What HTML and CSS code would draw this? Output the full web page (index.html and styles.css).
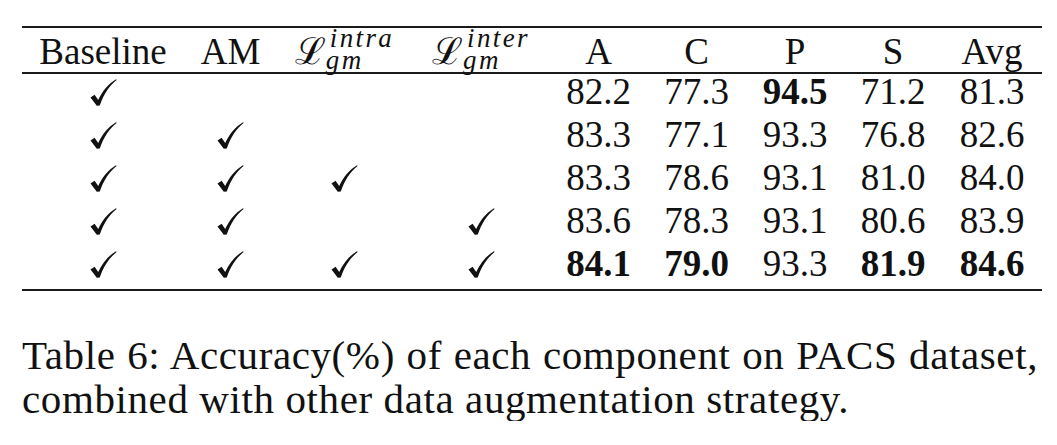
FILE: index.html
```html
<!DOCTYPE html>
<html lang="en">
  <head>
    <meta charset="UTF-8" />
    <title>Table 6</title>
    <link rel="stylesheet" href="styles.css">
  </head>
  <body>
    <div class="page">
      <div class="results">
        <div class="cell head">Baseline</div>
        <div class="cell head">AM</div>
        <div class="cell head">
          <span class="math"><span class="cal">ℒ</span><span class="scripts"><i class="sup">intra</i><i class="sub">gm</i></span></span>
        </div>
        <div class="cell head">
          <span class="math"><span class="cal">ℒ</span><span class="scripts"><i class="sup">inter</i><i class="sub">gm</i></span></span>
        </div>
        <div class="cell head">A</div>
        <div class="cell head">C</div>
        <div class="cell head">P</div>
        <div class="cell head">S</div>
        <div class="cell head">Avg</div>

        <!-- row 1 -->
        <div class="cell"><svg class="tick" viewBox="0 0 27 27"><path d="M0.5 18.5 L4.6 15.8 L8.2 21 C12 12.5 18 5 26 0.2 L26.6 1 C19.5 6.8 13.6 15 9.8 26.6 L6.8 26.8 Z"/></svg></div>
        <div class="cell"></div>
        <div class="cell"></div>
        <div class="cell"></div>
        <div class="cell">82.2</div>
        <div class="cell">77.3</div>
        <div class="cell best">94.5</div>
        <div class="cell">71.2</div>
        <div class="cell">81.3</div>

        <!-- row 2 -->
        <div class="cell"><svg class="tick" viewBox="0 0 27 27"><path d="M0.5 18.5 L4.6 15.8 L8.2 21 C12 12.5 18 5 26 0.2 L26.6 1 C19.5 6.8 13.6 15 9.8 26.6 L6.8 26.8 Z"/></svg></div>
        <div class="cell"><svg class="tick" viewBox="0 0 27 27"><path d="M0.5 18.5 L4.6 15.8 L8.2 21 C12 12.5 18 5 26 0.2 L26.6 1 C19.5 6.8 13.6 15 9.8 26.6 L6.8 26.8 Z"/></svg></div>
        <div class="cell"></div>
        <div class="cell"></div>
        <div class="cell">83.3</div>
        <div class="cell">77.1</div>
        <div class="cell">93.3</div>
        <div class="cell">76.8</div>
        <div class="cell">82.6</div>

        <!-- row 3 -->
        <div class="cell"><svg class="tick" viewBox="0 0 27 27"><path d="M0.5 18.5 L4.6 15.8 L8.2 21 C12 12.5 18 5 26 0.2 L26.6 1 C19.5 6.8 13.6 15 9.8 26.6 L6.8 26.8 Z"/></svg></div>
        <div class="cell"><svg class="tick" viewBox="0 0 27 27"><path d="M0.5 18.5 L4.6 15.8 L8.2 21 C12 12.5 18 5 26 0.2 L26.6 1 C19.5 6.8 13.6 15 9.8 26.6 L6.8 26.8 Z"/></svg></div>
        <div class="cell"><svg class="tick" viewBox="0 0 27 27"><path d="M0.5 18.5 L4.6 15.8 L8.2 21 C12 12.5 18 5 26 0.2 L26.6 1 C19.5 6.8 13.6 15 9.8 26.6 L6.8 26.8 Z"/></svg></div>
        <div class="cell"></div>
        <div class="cell">83.3</div>
        <div class="cell">78.6</div>
        <div class="cell">93.1</div>
        <div class="cell">81.0</div>
        <div class="cell">84.0</div>

        <!-- row 4 -->
        <div class="cell"><svg class="tick" viewBox="0 0 27 27"><path d="M0.5 18.5 L4.6 15.8 L8.2 21 C12 12.5 18 5 26 0.2 L26.6 1 C19.5 6.8 13.6 15 9.8 26.6 L6.8 26.8 Z"/></svg></div>
        <div class="cell"><svg class="tick" viewBox="0 0 27 27"><path d="M0.5 18.5 L4.6 15.8 L8.2 21 C12 12.5 18 5 26 0.2 L26.6 1 C19.5 6.8 13.6 15 9.8 26.6 L6.8 26.8 Z"/></svg></div>
        <div class="cell"></div>
        <div class="cell"><svg class="tick" viewBox="0 0 27 27"><path d="M0.5 18.5 L4.6 15.8 L8.2 21 C12 12.5 18 5 26 0.2 L26.6 1 C19.5 6.8 13.6 15 9.8 26.6 L6.8 26.8 Z"/></svg></div>
        <div class="cell">83.6</div>
        <div class="cell">78.3</div>
        <div class="cell">93.1</div>
        <div class="cell">80.6</div>
        <div class="cell">83.9</div>

        <!-- row 5 -->
        <div class="cell"><svg class="tick" viewBox="0 0 27 27"><path d="M0.5 18.5 L4.6 15.8 L8.2 21 C12 12.5 18 5 26 0.2 L26.6 1 C19.5 6.8 13.6 15 9.8 26.6 L6.8 26.8 Z"/></svg></div>
        <div class="cell"><svg class="tick" viewBox="0 0 27 27"><path d="M0.5 18.5 L4.6 15.8 L8.2 21 C12 12.5 18 5 26 0.2 L26.6 1 C19.5 6.8 13.6 15 9.8 26.6 L6.8 26.8 Z"/></svg></div>
        <div class="cell"><svg class="tick" viewBox="0 0 27 27"><path d="M0.5 18.5 L4.6 15.8 L8.2 21 C12 12.5 18 5 26 0.2 L26.6 1 C19.5 6.8 13.6 15 9.8 26.6 L6.8 26.8 Z"/></svg></div>
        <div class="cell"><svg class="tick" viewBox="0 0 27 27"><path d="M0.5 18.5 L4.6 15.8 L8.2 21 C12 12.5 18 5 26 0.2 L26.6 1 C19.5 6.8 13.6 15 9.8 26.6 L6.8 26.8 Z"/></svg></div>
        <div class="cell best">84.1</div>
        <div class="cell best">79.0</div>
        <div class="cell">93.3</div>
        <div class="cell best">81.9</div>
        <div class="cell best">84.6</div>
      </div>

      <p class="caption">
        <span class="first-line">Table 6: Accuracy(%) of each component on PACS dataset,</span>
        combined with other data augmentation strategy.
      </p>
    </div>
  </body>
</html>
```

FILE: styles.css
```css
body {
  margin: 0;
  background-color: #fff;
  color: #111;
  font-family: "Liberation Serif", "Times New Roman", serif;
}

.page {
  padding: 26px 0 0 22px;
}

.results {
  display: grid;
  grid-template-columns: 162px 93px 135px 138px 97px 99px 98px 98px 100px;
  width: 1020px;
  border-top: 2px solid #1a1a1a;
  border-bottom: 2px solid #1a1a1a;
}

.cell {
  font-size: 37px;
  line-height: 35px;
  height: 43px;
  box-sizing: border-box;
  text-align: center;
  white-space: nowrap;
}

.cell.head {
  height: 46px;
  padding-top: 6px;
  border-bottom: 2px solid #1a1a1a;
}

.best {
  font-weight: bold;
}

.tick {
  width: 27px;
  height: 27px;
  vertical-align: -2px;
  fill: #111;
}

/* L_gm with stacked super/subscript */
.math {
  display: inline-block;
  line-height: 35px;
}

.cal {
  font-family: "DejaVu Serif", serif;
  font-size: 37px;
}

.scripts {
  display: inline-flex;
  flex-direction: column;
  align-items: flex-start;
  vertical-align: 17px;
  margin-top: -20px;
  margin-bottom: -20px;
  font-family: "Liberation Serif", serif;
  font-size: 27px;
  line-height: 22px;
  letter-spacing: 2.4px;
}

.sup {
  margin-left: 4px;
}

.caption {
  width: 1016px;
  margin: 42px 0 0;
  font-size: 41px;
  line-height: 44px;
  letter-spacing: 0.6px;
}

.first-line {
  display: block;
  text-align: justify;
  text-align-last: justify;
}
```
